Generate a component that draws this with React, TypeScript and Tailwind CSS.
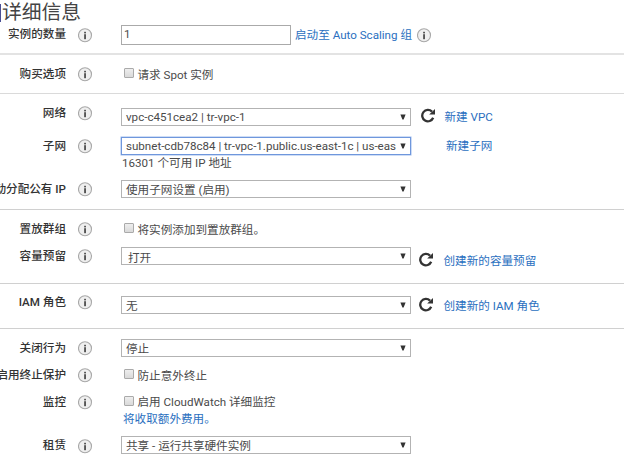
import type { ReactNode } from 'react';

function Info() {
  return (
    <svg className="block size-[15px]" viewBox="0 0 15 15">
      <circle cx="7" cy="7.3" r="6.5" fill="#efefef" stroke="#a8a8a8" strokeWidth="1.1" />
      <rect x="6.2" y="3.8" width="1.7" height="1.6" fill="#444" />
      <rect x="6.2" y="6.2" width="1.7" height="5" fill="#444" />
    </svg>
  );
}

function Refresh() {
  return (
    <svg className="block size-[15px] shrink-0" viewBox="0 0 15 15">
      <path d="M11 3.6A5.7 5.7 0 1 0 12.2 9.8" fill="none" stroke="#333" strokeWidth="2.3" />
      <path d="M14 0.9V6.5H8.2z" fill="#333" />
    </svg>
  );
}

function Select({ text, focused, pad = 'pl-1', textTop = 'pt-0' }: { text: string; focused?: boolean; pad?: string; textTop?: string }) {
  return (
    <div className={`flex h-[18px] w-[290px] shrink-0 items-center justify-between border bg-white pr-[4px] ${pad} ${focused ? 'border-[#6f97dc] ring-[0.5px] ring-[#9dbbee]' : 'border-[#b3b3b3]'}`}>
      <span className={`leading-4 ${textTop} ${focused ? 'tracking-[-0.01px]' : ''}`}>{text}</span>
      <svg className="mb-px h-[6px] w-[6px] shrink-0" viewBox="0 0 6 6">
        <path d="M0.4 0.4h5.2L3.6 5.6H2.4z" fill="#333" />
      </svg>
    </div>
  );
}

function Check({ text, top, textTop }: { text: string; top: string; textTop: string }) {
  return (
    <div className="flex items-start pl-[3px]">
      <span className={`size-[10px] rounded-[1px] border border-[#aaa] bg-linear-to-b from-[#eeeeee] to-[#d9d9d9] ${top}`} />
      <span className={`ml-[3.5px] leading-5 ${textTop}`}>{text}</span>
    </div>
  );
}

function Row({ label, labelTop, iconTop, height, children }: { label: string; labelTop: string; iconTop: string; height: string; children: ReactNode }) {
  return (
    <div className={`flex items-start ${height}`}>
      <div className={`flex w-[66px] shrink-0 justify-end font-medium leading-5 text-[#333] ${labelTop}`}>
        <span>{label}</span>
      </div>
      <div className={`ml-[12px] w-[43px] shrink-0 ${iconTop}`}>
        <Info />
      </div>
      {children}
    </div>
  );
}

function Link({ text, place }: { text: string; place: string }) {
  return <a className={`leading-5 text-[#2a6fc0] ${place}`}>{text}</a>;
}

export default function App() {
  return (
    <main className="h-[458px] w-[624px] overflow-hidden whitespace-nowrap bg-white font-['Roboto','Noto_Sans_CJK_SC',sans-serif] text-[11.6px] text-[#4a4a4a]">
      <h1 className="flex h-6 items-center pt-px text-[19.8px] leading-6 text-[#444]">
        <span className="mr-px h-[18px] w-px bg-[#4a4f94]" />
        详细信息
      </h1>

      <section className="h-[31px] border-b-2 border-[#e3e3e3]">
        <Row label="实例的数量" labelTop="mt-0" iconTop="mt-[4px]" height="h-[29px]">
          <div className="mt-px flex h-5 w-[170px] items-center border border-[#aaa] pl-[2px]">1</div>
          <Link text="启动至 Auto Scaling 组" place="ml-1 mt-px" />
          <div className="ml-[5px] mt-[4px]"><Info /></div>
        </Row>
      </section>

      <section className="h-[39px] border-b border-[#dadada]">
        <Row label="购买选项" labelTop="mt-[8.5px]" iconTop="mt-[12px]" height="h-[38px]">
          <Check text="请求 Spot 实例" top="mt-[13px]" textTop="mt-[10px]" />
        </Row>
      </section>

      <section className="h-[116px] border-b border-[#d0d0d0]">
        <Row label="网络" labelTop="mt-[8.5px]" iconTop="mt-[12px]" height="h-[38px]">
          <div className="mt-[14px]"><Select text="vpc-c451cea2 | tr-vpc-1" /></div>
          <div className="ml-[9.5px] mt-[14px]"><Refresh /></div>
          <Link text="新建 VPC" place="ml-[9px] mt-[13px]" />
        </Row>
        <Row label="子网" labelTop="mt-[3.5px]" iconTop="mt-[7px]" height="h-[42px]">
          <div className="mt-[5px]">
            <Select text="subnet-cdb78c84 | tr-vpc-1.public.us-east-1c | us-eas" focused />
            <p className="pl-px leading-[16px]">16301 个可用 IP 地址</p>
          </div>
          <Link text="新建子网" place="ml-[35px] mt-[4px]" />
        </Row>
        <Row label="动分配公有 IP" labelTop="mt-[4.5px]" iconTop="mt-[8px]" height="h-[35px]">
          <div className="mt-[6px]"><Select text="使用子网设置 (启用)" textTop="pt-px" /></div>
        </Row>
      </section>

      <section className="h-[74px] border-b border-[#d0d0d0]">
        <Row label="置放群组" labelTop="mt-[8.5px]" iconTop="mt-[12px]" height="h-[32px]">
          <Check text="将实例添加到置放群组。" top="mt-[13px]" textTop="mt-[10px]" />
        </Row>
        <Row label="容量预留" labelTop="mt-[3.5px]" iconTop="mt-[7px]" height="h-[41px]">
          <div className="mt-[5px]"><Select text="打开" pad="pl-[6px]" textTop="pt-[3px]" /></div>
          <div className="ml-[8px] mt-[10px]"><Refresh /></div>
          <Link text="创建新的容量预留" place="ml-[9.5px] mt-[8.5px]" />
        </Row>
      </section>

      <section className="h-[45px] border-b border-[#d0d0d0]">
        <Row label="IAM 角色" labelTop="mt-[8px]" iconTop="mt-[11px]" height="h-[44px]">
          <div className="mt-[12px]"><Select text="无" textTop="pt-[2px]" /></div>
          <div className="ml-[8px] mt-[13px]"><Refresh /></div>
          <Link text="创建新的 IAM 角色" place="ml-[9.5px] mt-[12px]" />
        </Row>
      </section>

      <section>
        <Row label="关闭行为" labelTop="mt-[8.5px]" iconTop="mt-[12px]" height="h-[33px]">
          <div className="mt-[10px]"><Select text="停止" textTop="pt-[2px]" /></div>
        </Row>
        <Row label="启用终止保护" labelTop="mt-[2.5px]" iconTop="mt-[6px]" height="h-[27px]">
          <Check text="防止意外终止" top="mt-[7px]" textTop="mt-[4px]" />
        </Row>
        <Row label="监控" labelTop="mt-[2.5px]" iconTop="mt-[6px]" height="h-[42px]">
          <div>
            <Check text="启用 CloudWatch 详细监控" top="mt-[7px]" textTop="mt-[3px]" />
            <a className="block pl-[2px] leading-[14px] text-[#2a6fc0]">将收取额外费用。</a>
          </div>
        </Row>
        <Row label="租赁" labelTop="mt-[4px]" iconTop="mt-[8px]" height="h-[27px]">
          <div className="mt-[5px]"><Select text="共享 - 运行共享硬件实例" textTop="pt-[2px]" /></div>
        </Row>
      </section>
    </main>
  );
}
